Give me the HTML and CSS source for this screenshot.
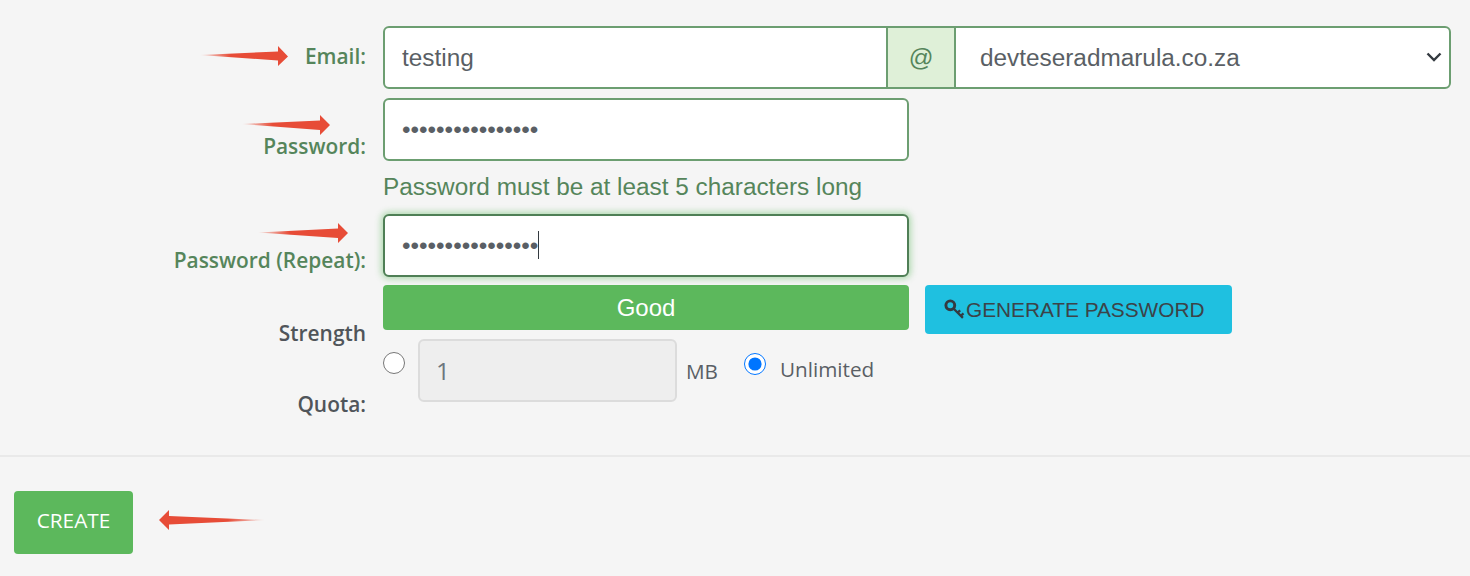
FILE: index.html
```html
<!DOCTYPE html>
<html lang="en">
<head>
<meta charset="utf-8">
<title>Create email account</title>
<link rel="stylesheet" href="styles.css">
</head>
<body>
<form class="form">
  <div class="row row-email">
    <label class="label label-ok label-center">Email:</label>
    <div class="group">
      <input class="field group-input" type="text" value="testing" readonly>
      <span class="group-at">@</span>
      <div class="select-wrap">
        <select class="field group-select"><option>devteseradmarula.co.za</option></select>
        <svg class="chevron" viewBox="0 0 16 10" width="16" height="10" aria-hidden="true">
          <path d="M1.5 1.5 L8 8 L14.5 1.5" fill="none" stroke="#343a40" stroke-width="2.4"/>
        </svg>
      </div>
    </div>
  </div>
  <div class="row row-pass">
    <label class="label label-ok label-low">Password:</label>
    <div class="narrow">
      <input class="field" type="password" value="1234567890123456" readonly>
      <p class="hint">Password must be at least 5 characters long</p>
    </div>
  </div>
  <div class="row row-repeat">
    <label class="label label-ok label-low">Password (Repeat):</label>
    <div class="narrow caret-wrap">
      <input class="field field-focus" type="password" value="1234567890123456" readonly>
      <span class="caret"></span>
    </div>
  </div>
  <div class="row row-strength">
    <label class="label label-strength">Strength</label>
    <div class="strength-controls">
      <div class="bar">Good</div>
      <button class="btn-generate" type="button">
        <svg class="key" viewBox="0 0 20 20" width="21" height="21" aria-hidden="true">
          <circle cx="6" cy="6" r="4.2" fill="none" stroke="#343a40" stroke-width="2.8"/>
          <path d="M9 9 L18 18 M13 13 L15.4 10.8 M16 16 L18.6 13.8" fill="none" stroke="#343a40" stroke-width="2.2"/>
        </svg><span>GENERATE PASSWORD</span>
      </button>
    </div>
  </div>
  <div class="row row-quota">
    <label class="label label-quota">Quota:</label>
    <div class="quota">
      <input class="radio" type="radio" name="quota">
      <input class="field field-quota" type="text" value="1" disabled>
      <span class="mb">MB</span>
      <input class="radio radio-second" type="radio" name="quota" checked>
      <span class="unlimited">Unlimited</span>
    </div>
  </div>
</form>
<footer class="footer">
  <button class="btn-create" type="button">CREATE</button>
</footer>
<svg class="arrows" width="1470" height="576" viewBox="0 0 1470 576" aria-hidden="true">
  <defs>
    <linearGradient id="fade-r" x1="0" x2="1" y1="0" y2="0">
      <stop offset="0" stop-color="#e74c37" stop-opacity="0.1"/>
      <stop offset="0.35" stop-color="#e74c37"/>
    </linearGradient>
    <linearGradient id="fade-l" x1="1" x2="0" y1="0" y2="0">
      <stop offset="0" stop-color="#e74c37" stop-opacity="0.1"/>
      <stop offset="0.35" stop-color="#e74c37"/>
    </linearGradient>
  </defs>
  <polygon fill="url(#fade-r)" points="200,55 278,51.5 278,46 288,56.5 278,66 278,60.5"/>
  <polygon fill="url(#fade-r)" points="242,124 320,120.5 320,115 330,125 320,135 320,130"/>
  <polygon fill="url(#fade-r)" points="258,232.5 338,228.5 338,223 348,233 338,243 338,238"/>
  <polygon fill="url(#fade-l)" points="265,520 169,516 169,510 159,520 169,530 169,524.5"/>
</svg>
</body>
</html>
```
FILE: styles.css
```css
* { box-sizing: border-box; }
html, body { margin: 0; padding: 0; }
body {
  position: relative;
  width: 1470px;
  height: 576px;
  overflow: hidden;
  background: #f5f5f5;
  font-family: "Liberation Sans", Arial, sans-serif;
  color: #495057;
}
.form { padding: 26px 19px 0 0; }
.row {
  display: grid;
  grid-template-columns: 366px 1fr;
  column-gap: 17px;
}
.label {
  font-family: "Open Sans", sans-serif;
  font-weight: 600;
  font-size: 20.9px;
  line-height: 24px;
  text-align: right;
  color: #50555a;
}
.label-ok { color: #55855b; }
.label-center { align-self: center; margin-bottom: 4px; }
.label-low { align-self: start; margin-top: 36px; }
.row-email { height: 63px; }
.row-pass { margin-top: 9px; height: 116px; }
.row-repeat { height: 63px; }
.row-repeat .label-low { margin-top: 34px; }
.row-strength { margin-top: 8px; height: 49px; }
.label-strength { align-self: start; margin-top: 36px; }
.row-quota { margin-top: 5px; height: 116px; }
.label-quota { align-self: start; margin-top: 53px; }
.field {
  display: block;
  height: 63px;
  width: 100%;
  padding: 0 17px;
  font-family: "Liberation Sans", Arial, sans-serif;
  font-size: 24.35px;
  color: #5a5f65;
  background: #fff;
  border: 2px solid #6c9e71;
  border-radius: 6px;
  outline: none;
}
.group { display: flex; height: 63px; }
.group-input {
  flex: 0 0 505px;
  width: 505px;
  border-radius: 6px 0 0 6px;
}
.group-at {
  flex: 0 0 66px;
  display: flex;
  align-items: center;
  justify-content: center;
  font-size: 24.35px;
  color: #55855b;
  background: #dff0d8;
  border-top: 2px solid #6c9e71;
  border-bottom: 2px solid #6c9e71;
}
.select-wrap { position: relative; flex: 1; min-width: 0; }
.group-select {
  appearance: none;
  -webkit-appearance: none;
  padding: 0 40px 0 24px;
  border-radius: 0 6px 6px 0;
}
.chevron {
  position: absolute;
  right: 9px;
  top: 26px;
}
.narrow { width: 526px; }
.hint {
  margin: 12px 0 0;
  font-size: 24.35px;
  line-height: 28px;
  color: #55855b;
}
.caret-wrap { position: relative; }
.field-focus {
  border-color: #4f7f56;
  box-shadow: 0 0 6px 2px rgba(92, 184, 92, 0.45);
}
.caret {
  position: absolute;
  left: 155px;
  top: 17px;
  width: 1px;
  height: 28px;
  background: #343a40;
}
.strength-controls { display: flex; align-items: flex-start; gap: 16px; }
.bar {
  flex: 0 0 526px;
  height: 45px;
  display: flex;
  align-items: center;
  justify-content: center;
  font-size: 24px;
  color: #fff;
  background: #5cb85c;
  border-radius: 4px;
}
.btn-generate {
  display: flex;
  align-items: center;
  height: 49px;
  width: 307px;
  padding: 0 0 0 19px;
  font-family: "Liberation Sans", Arial, sans-serif;
  font-size: 20.8px;
  color: #3c4348;
  background: #1fc0e0;
  border: 0;
  border-radius: 4px;
}
.btn-generate span { margin: 1px 0 0 1px; }
.key { flex: none; }
.quota { display: flex; align-items: flex-start; }
.radio { flex: none; width: 22px; height: 22px; margin: 13px 0 0; }
.field-quota {
  flex: 0 0 259px;
  width: 259px;
  margin-left: 13px;
  padding: 0 16px;
  font-family: "Open Sans", sans-serif;
  color: #6c757d;
  background: #eee;
  border: 2px solid #dcdcdc;
}
.mb, .unlimited {
  font-family: "Open Sans", sans-serif;
  font-size: 20.7px;
  line-height: 28px;
  color: #5a5f65;
}
.mb { margin: 18px 0 0 9px; }
.radio-second { margin: 14px 0 0 26px; }
.unlimited { margin: 16px 0 0 14px; }
.footer {
  padding: 34px 0 0 14px;
  border-top: 2px solid #e9e9e9;
}
.btn-create {
  display: block;
  width: 119px;
  height: 63px;
  padding: 0 0 6px;
  font-family: "Open Sans", sans-serif;
  font-size: 20.8px;
  color: #fff;
  background: #5cb85c;
  border: 0;
  border-radius: 4px;
}
.arrows { position: absolute; left: 0; top: 0; pointer-events: none; }
```
